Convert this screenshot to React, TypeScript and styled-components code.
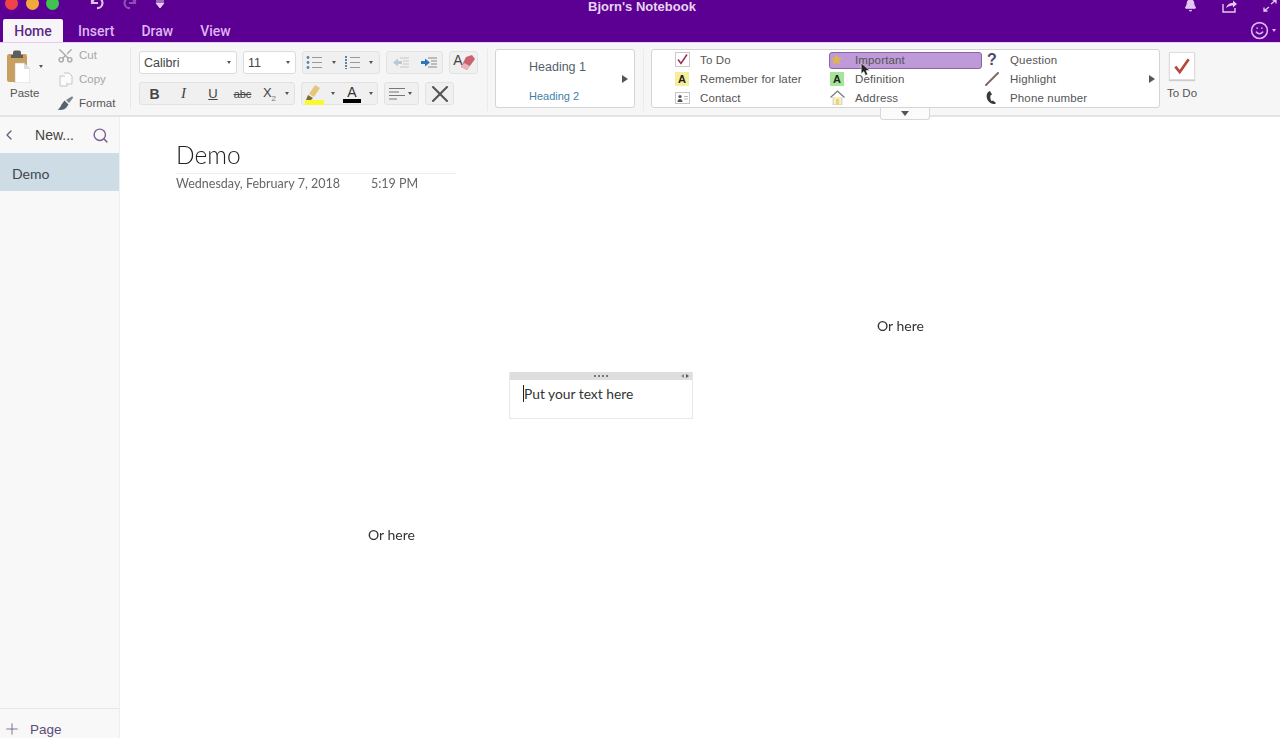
import React from 'react';
import styled, { createGlobalStyle } from 'styled-components';
import { Bell, ChevronLeft, Plus, Scissors, Search, Smile, X } from 'lucide-react';

const GlobalStyle = createGlobalStyle`
  html, body, #root { margin: 0; height: 100%; }
  body {
    background: #fff;
    color: #333;
    font-family: "Liberation Sans", Arial, sans-serif;
    overflow: hidden;
  }
`;

const Window = styled.div`
  display: flex;
  flex-direction: column;
  height: 738px;
  overflow: hidden;
  filter: blur(0.35px);
`;

const Header = styled.header`
  flex: none;
  height: 42px;
  background: #5b0092;
  display: flex;
  flex-direction: column;
`;

const TitleRow = styled.div`
  height: 19px;
  display: grid;
  grid-template-columns: 1fr auto 1fr;
  overflow: hidden;
`;

const TitleLeft = styled.div`
  display: flex;
  align-items: flex-start;
  padding-left: 5px;
`;

const Light = styled.span<{ $color: string }>`
  width: 13px;
  height: 13px;
  margin: -3px 7.5px 0 0;
  border-radius: 50%;
  background: ${(p) => p.$color};
  flex: none;
`;

const QuickIcon = styled.span<{ $dim?: boolean; $gap: number; $top?: number; $color?: string }>`
  display: flex;
  margin-left: ${(p) => p.$gap}px;
  margin-top: ${(p) => p.$top ?? -1}px;
  color: ${(p) => p.$color ?? 'inherit'};
  opacity: ${(p) => (p.$dim ? 0.4 : 1)};
`;

const NotebookTitle = styled.div`
  font-size: 13px;
  font-weight: 700;
  line-height: 14px;
  margin-left: 4px;
  color: #e6d5ee;
`;

const TitleRight = styled.div`
  display: flex;
  justify-content: flex-end;
  align-items: flex-start;
  gap: 25px;
  padding-right: 3px;
  color: #e3c9f0;
`;

const TabRow = styled.nav`
  flex: 1;
  display: flex;
  align-items: flex-end;
  padding-left: 3px;
`;

const Tab = styled.div<{ $active?: boolean }>`
  width: ${(p) => (p.$active ? '60px' : 'auto')};
  height: 23px;
  margin-right: ${(p) => (p.$active ? '15px' : '27px')};
  display: flex;
  align-items: center;
  justify-content: center;
  border-radius: 2px 2px 0 0;
  font: 500 14px "Roboto", sans-serif;
  background: ${(p) => (p.$active ? '#f8f5f9' : 'transparent')};
  color: ${(p) => (p.$active ? '#5b2a85' : '#dfb4f0')};
`;

const SmileButton = styled.div`
  margin-left: auto;
  align-self: center;
  display: flex;
  align-items: center;
  gap: 3px;
  margin-right: 4px;
  color: #dfb4f0;
`;

const Caret = styled.span<{ $size?: number; $color?: string }>`
  width: 0;
  height: 0;
  flex: none;
  border-left: ${(p) => p.$size ?? 3}px solid transparent;
  border-right: ${(p) => p.$size ?? 3}px solid transparent;
  border-top: ${(p) => (p.$size ?? 3) + 1}px solid ${(p) => p.$color ?? '#555'};
`;

const Ribbon = styled.section`
  flex: none;
  height: 75px;
  box-sizing: border-box;
  display: flex;
  background: #f6f6f6;
  border-top: 1px solid #ecc9f7;
  border-bottom: 2px solid #e4e4e4;
  position: relative;
  font-size: 11.5px;
  letter-spacing: 0.15px;
`;

const PasteGroup = styled.div`
  width: 130px;
  height: 62px;
  margin-top: 4px;
  flex: none;
  display: flex;
  border-right: 1px solid #e8e8e8;
  letter-spacing: 0;
`;

const PasteColumn = styled.div`
  width: 48px;
  display: flex;
  flex-direction: column;
  align-items: flex-start;
  padding-left: 6px;
  box-sizing: border-box;
`;

const PasteIconRow = styled.div`
  height: 38px;
  display: flex;
  align-items: center;
  gap: 9px;
`;

const PasteLabel = styled.div`
  margin-top: 2px;
  margin-left: 4px;
  color: #555;
`;

const ClipList = styled.div`
  display: flex;
  flex-direction: column;
  justify-content: space-between;
  margin-left: 9px;
  height: 64px;
`;

const ClipItem = styled.div<{ $dim?: boolean }>`
  display: flex;
  align-items: center;
  gap: 5px;
  height: 16px;
  color: ${(p) => (p.$dim ? '#a6a6a6' : '#555')};
`;

const ClipIcon = styled.span`
  width: 17px;
  display: flex;
  justify-content: center;
`;

const ScissorsIcon = styled(Scissors)`
  transform: rotate(-90deg);
`;

const FontArea = styled.div`
  margin: 8px 0 0 8px;
  width: 340px;
  flex: none;
  display: flex;
  flex-direction: column;
  gap: 8px;
  letter-spacing: 0;
`;

const ToolRow = styled.div`
  display: flex;
  gap: 6px;
  height: 23px;
`;

const Select = styled.div<{ $width: number }>`
  width: ${(p) => p.$width}px;
  box-sizing: border-box;
  display: flex;
  align-items: center;
  justify-content: space-between;
  padding: 0 5px 0 4px;
  background: #fff;
  border: 1px solid #dcdcdc;
  border-radius: 3px;
  font-size: 12.5px;
  color: #444;
`;

const ToolGroup = styled.div<{ $width: number }>`
  width: ${(p) => p.$width}px;
  box-sizing: border-box;
  display: flex;
  align-items: center;
  background: #f0f0f0;
  border: 1px solid #e2e2e2;
  border-radius: 3px;
`;

const Tool = styled.div<{ $width: number }>`
  width: ${(p) => p.$width}px;
  height: 100%;
  flex: none;
  display: flex;
  align-items: center;
  justify-content: center;
  color: #444;
`;

const Bold = styled.span`
  font-size: 14px;
  font-weight: 700;
`;
const Italic = styled.span`
  font: italic 400 15px "Liberation Serif", serif;
`;
const Under = styled.span`
  font-size: 13px;
  text-decoration: underline;
`;
const Strike = styled.span`
  font-size: 11px;
  text-decoration: line-through;
`;
const Sub = styled.span`
  font-size: 13px;
  sub { font-size: 8px; color: #777; }
`;

const FontColor = styled.span`
  display: flex;
  flex-direction: column;
  align-items: center;
  font-size: 14px;
  line-height: 14px;
  color: #333;
  &::after {
    content: '';
    width: 18px;
    height: 4px;
    background: #000;
  }
`;

const GroupDivider = styled.div`
  width: 1px;
  height: 62px;
  margin: 6px 7px 0 8px;
  flex: none;
  background: #ebebeb;
`;

const StylesBox = styled.div`
  width: 140px;
  height: 59px;
  margin-top: 6px;
  flex: none;
  box-sizing: border-box;
  background: #fff;
  border: 1px solid #d4d4d4;
  border-radius: 3px;
  display: flex;
  align-items: center;
  position: relative;
`;

const StyleNames = styled.div`
  margin-left: 33px;
  margin-top: 5px;
  flex: 1;
  display: flex;
  flex-direction: column;
  gap: 16px;
  letter-spacing: 0;
`;

const StyleName = styled.div<{ $second?: boolean }>`
  font-size: ${(p) => (p.$second ? '11px' : '12.5px')};
  color: ${(p) => (p.$second ? '#3f7fa8' : '#555f6b')};
`;

const MoreArrow = styled.span`
  width: 0;
  height: 0;
  margin-right: 6px;
  border-top: 4px solid transparent;
  border-bottom: 4px solid transparent;
  border-left: 6px solid #555;
`;

const TagsWrap = styled.div`
  position: relative;
`;

const TagsBox = styled(StylesBox)`
  width: 509px;
  padding-left: 22px;
  display: grid;
  grid-template-columns: 155px 155px 1fr;
  grid-template-rows: repeat(3, 19px);
  align-items: stretch;
  align-content: center;
`;

const TagRow = styled.div`
  display: flex;
  align-items: center;
  color: #555;
  position: relative;
`;

const TagIcon = styled.span`
  width: 26px;
  flex: none;
  display: flex;
  padding-left: 1px;
  box-sizing: border-box;
`;

const QuestionMark = styled.span`
  margin-left: 2px;
  font-size: 16px;
  line-height: 16px;
  font-weight: 700;
  color: #4a4a6a;
`;

const HotPill = styled.span`
  position: absolute;
  left: 0;
  right: 2px;
  top: 2px;
  height: 17px;
  box-sizing: border-box;
  background: #bf9ad8;
  border: 1px solid #8d62ab;
  border-radius: 3px;
`;

const HotLabel = styled.span`
  position: relative;
  display: flex;
  align-items: center;
`;

const Pointer = styled.svg`
  position: absolute;
  left: 31px;
  top: 12px;
`;

const GalleryArrow = styled(MoreArrow)`
  position: absolute;
  right: 4px;
  top: 25px;
  margin: 0;
`;

const LetterTag = styled.span<{ $bg: string }>`
  width: 14px;
  height: 14px;
  display: flex;
  align-items: center;
  justify-content: center;
  background: ${(p) => p.$bg};
  color: #222;
  font-size: 11px;
  font-weight: 700;
`;

const ExpandTab = styled.div`
  position: absolute;
  left: 229px;
  top: 65px;
  width: 50px;
  height: 12px;
  box-sizing: border-box;
  display: flex;
  justify-content: center;
  padding-top: 3px;
  background: #fbfbfb;
  border: 1px solid #d8d8d8;
  border-top: none;
  border-radius: 0 0 3px 3px;
  z-index: 2;
`;

const ToDoColumn = styled.div`
  margin: 9px 0 0 8px;
  width: 28px;
  display: flex;
  flex-direction: column;
  align-items: center;
  gap: 7px;
`;

const ToDoBox = styled.div`
  width: 24px;
  height: 26px;
  background: #fff;
  border: 1px solid #ddd;
  box-shadow: 0 1px 1px #ccc;
  display: flex;
  align-items: center;
  justify-content: center;
`;

const ToDoLabel = styled.div`
  white-space: nowrap;
  letter-spacing: 0;
  color: #555;
`;

const Body = styled.main`
  flex: 1;
  min-height: 0;
  display: flex;
`;

const Sidebar = styled.aside`
  width: 120px;
  flex: none;
  box-sizing: border-box;
  display: flex;
  flex-direction: column;
  background: #f8f8f8;
  border-right: 1px solid #eee;
`;

const SideHead = styled.div`
  height: 36px;
  display: flex;
  align-items: center;
  justify-content: space-between;
  padding: 0 10px 0 1px;
  font-size: 14px;
  color: #444;
`;

const PageRow = styled.div`
  height: 38px;
  display: flex;
  align-items: center;
  padding: 2px 0 0 12px;
  box-sizing: border-box;
  background: #cddce5;
  font: 14px "Lato", sans-serif;
  color: #3d4650;
`;

const SideFoot = styled.div`
  margin-top: auto;
  height: 30px;
  padding: 11px 0 0 3px;
  box-sizing: border-box;
  display: flex;
  align-items: center;
  gap: 9px;
  border-top: 1px solid #e6e6e6;
  font-size: 13.5px;
  color: #5d4a78;
`;

const Canvas = styled.div`
  flex: 1;
  position: relative;
  font-family: "Lato", sans-serif;
`;

const PageHead = styled.div`
  width: 291px;
  margin: 21px 0 0 45px;
  padding-left: 11px;
  box-sizing: border-box;
`;

const PageTitle = styled.div`
  height: 35px;
  line-height: 33px;
  border-bottom: 1px solid #ececec;
  font-size: 24.5px;
  font-weight: 300;
  color: #222;
`;

const PageDate = styled.div`
  display: flex;
  gap: 31px;
  margin-top: 2px;
  font-size: 12.5px;
  line-height: 15px;
  color: #666;
`;

const Outline = styled.div`
  position: absolute;
  left: 389px;
  top: 255px;
  width: 184px;
  height: 47px;
  box-sizing: border-box;
  background: #fff;
  border: 1px solid #e8e8e8;
  border-top: none;
`;

const OutlineBar = styled.div`
  height: 8px;
  background: #dedede;
  display: flex;
  align-items: center;
  justify-content: center;
  position: relative;
  &::before {
    content: '';
    width: 14px;
    border-top: 2px dotted #777;
  }
`;

const ResizeHandle = styled.span`
  position: absolute;
  right: 3px;
  top: 2px;
  display: flex;
  gap: 2px;
`;

const Triangle = styled.span<{ $right?: boolean }>`
  width: 0;
  height: 0;
  border-top: 2.5px solid transparent;
  border-bottom: 2.5px solid transparent;
  ${(p) => (p.$right ? 'border-left: 3px solid #555;' : 'border-right: 3px solid #888;')}
`;

const OutlineText = styled.div`
  margin: 5px 0 0 13px;
  border-left: 1px solid #222;
  width: 140px;
  height: 17px;
  font-size: 13.8px;
  line-height: 17px;
  color: #333;
  white-space: nowrap;
`;

const FreeText = styled.div<{ $x: number; $y: number }>`
  position: absolute;
  left: ${(p) => p.$x}px;
  top: ${(p) => p.$y}px;
  font-size: 14px;
  line-height: 16px;
  color: #333;
`;

const ClipboardIcon = () => (
  <svg width="24" height="33" viewBox="0 0 24 33">
    <rect x="1" y="4" width="20" height="28" rx="2" fill="#c99f5f" />
    <path d="M7 5V2.5a2 2 0 0 1 2-2h4a2 2 0 0 1 2 2V5h2v3H5V5z" fill="#5d5d5d" />
    <path d="M9 13h9l6 6v14H9z" fill="#fff" stroke="#bbb" strokeWidth=".6" />
    <path d="M18 13v6h6z" fill="#ddd" />
  </svg>
);

const CopyIcon = () => (
  <svg width="14" height="15" viewBox="0 0 14 15" fill="#fbfbfb" stroke="#c4c4c4">
    <path d="M1 4h5l2 2v8H1z" />
    <path d="M5 1h5l3 3v8H8" />
  </svg>
);

const BrushIcon = () => (
  <svg width="17" height="15" viewBox="0 0 17 15">
    <path d="M9 4l3 3 4-5c.6-.9-.5-2-1.400-1.400z" fill="#7a8794" />
    <path d="M7.500 4.500l4 4-2.500 3.500c-2 2-5.500 2.500-8.500 1.500 2-1 3-2.500 4-5z" fill="#55626f" />
  </svg>
);

const ListIcon = ({ numbered }: { numbered?: boolean }) => (
  <svg width="17" height="15" viewBox="0 0 17 15" stroke="#999" strokeWidth="1.200">
    <path d="M6 2.500h10M6 7.500h10M6 12.500h10" />
    {numbered ? (
      <path d="M2 1v13" stroke="#5e83a8" strokeWidth="2" strokeDasharray="2 1" />
    ) : (
      <g fill="#5e83a8" stroke="none">
        <circle cx="2" cy="2.500" r="1.400" />
        <circle cx="2" cy="7.500" r="1.400" />
        <circle cx="2" cy="12.500" r="1.400" />
      </g>
    )}
  </svg>
);

const IndentIcon = ({ more }: { more?: boolean }) => (
  <svg width="18" height="13" viewBox="0 0 18 13">
    <path d="M8 2h9M11 5h6M11 8h6M8 11h9" stroke={more ? '#888' : '#c8c8c8'} strokeWidth="1.200" />
    {more ? (
      <path d="M1 5h4V2.500l5 4-5 4V8H1z" fill="#2f74b5" />
    ) : (
      <path d="M10 5H6V2.500l-5 4 5 4V8h4z" fill="#b6c8da" />
    )}
  </svg>
);

const EraserLetter = styled.span`
  font-size: 14px;
  line-height: 14px;
  margin: -6px -4px 0 0;
  color: #444;
`;

const EraserIcon = () => (
  <svg width="16" height="17" viewBox="0 0 16 17">
    <path d="M7 3l6-2 3 4-8 11-6-3z" fill="#c8636f" />
    <path d="M2 13l3-4 6 3-3 4z" fill="#e7b7bb" />
  </svg>
);

const HighlighterIcon = () => (
  <svg width="20" height="22" viewBox="0 0 20 22">
    <path d="M5 11l6-9 5 3-6 9z" fill="#e6c67c" />
    <path d="M4 12l5 3-2 2H2z" fill="#7b6a3b" />
    <rect x="1" y="17" width="19" height="5" fill="#f6fa2e" />
  </svg>
);

const AlignIcon = () => (
  <svg width="16" height="13" viewBox="0 0 16 13" stroke="#777" strokeWidth="1.200">
    <path d="M0 1.500h16M0 5h10M0 8.500h16M0 12h8" />
  </svg>
);

const CheckBox = () => (
  <svg width="15" height="15" viewBox="0 0 15 15">
    <rect x=".5" y=".5" width="14" height="14" fill="#fff" stroke="#c9c9c9" />
    <path d="M3 7.500l3 4 6-9" fill="none" stroke="#9b2f4d" strokeWidth="1.500" />
  </svg>
);

const StarIcon = () => (
  <svg width="13" height="13" viewBox="0 0 13 13">
    <path d="M6.500 1l1.700 3.600 3.800.5-2.800 2.700.7 3.900-3.400-1.900-3.400 1.900.7-3.900L1 5.100l3.800-.5z" fill="#dfb64e" />
  </svg>
);

const ContactIcon = () => (
  <svg width="15" height="12" viewBox="0 0 15 12">
    <rect x=".5" y=".5" width="14" height="11" fill="#fff" stroke="#c4c4c4" />
    <circle cx="5" cy="4.500" r="1.600" fill="#555" />
    <path d="M2.500 10c0-2 1-3 2.500-3s2.500 1 2.500 3z" fill="#555" />
    <path d="M9 4.500h4M9 7h4" stroke="#bbb" />
  </svg>
);

const HouseIcon = () => (
  <svg width="15" height="15" viewBox="0 0 15 15">
    <path d="M3 7v8h9V7" fill="#f7edbe" stroke="#bbb" strokeWidth=".6" />
    <path d="M.5 7.500L7.500 1l7 6.500" fill="none" stroke="#777" strokeWidth="1.200" />
    <rect x="6" y="9" width="3" height="6" fill="#e8d47a" />
  </svg>
);

const PencilIcon = () => (
  <svg width="15" height="15" viewBox="0 0 15 15">
    <path d="M1 14L13 2" stroke="#7c6a68" strokeWidth="2" strokeLinecap="round" />
  </svg>
);

const PhoneIcon = () => (
  <svg width="12" height="15" viewBox="0 0 12 15">
    <path d="M5 1C2 2 1 5 2 8.500 3 12 6 14 10 14l1-1-3-2.500-1.300.8C5.500 10 5 7 5.500 5.500L7 4.500 5 1z" fill="#3a3a3a" />
  </svg>
);

const ShareIcon = () => (
  <svg width="16" height="14" viewBox="0 0 16 14" fill="none" stroke="currentColor" strokeWidth="1.400">
    <path d="M1 5v8h12V9" />
    <path d="M4 9c1-3 3-5 7-5V1.500L15 5l-4 3.500V6.500C8 6.500 6 7.500 4 9z" fill="currentColor" stroke="none" />
  </svg>
);

const FullIcon = () => (
  <svg width="14" height="13" viewBox="0 0 14 13" fill="none" stroke="currentColor" strokeWidth="1.300">
    <path d="M8 5l5-4M9.500 1H13v3.500M6 8l-5 4M4.500 12H1V8.500" />
  </svg>
);

const UndoIcon = () => (
  <svg width="16" height="14" viewBox="0 0 16 14" fill="none" stroke="currentColor" strokeWidth="2.200">
    <path d="M3 1v6h6" />
    <path d="M3.500 6.500A5 5 0 1 1 8 12" />
  </svg>
);

const RedoIcon = () => (
  <svg width="16" height="14" viewBox="0 0 16 14" fill="none" stroke="currentColor" strokeWidth="2.200">
    <path d="M13 1v6H7" />
    <path d="M12.500 6.500A5 5 0 1 0 8 12" />
  </svg>
);

const tags = [
  { icon: <CheckBox />, label: 'To Do' },
  { icon: <StarIcon />, label: 'Important', hot: true },
  { icon: <QuestionMark>?</QuestionMark>, label: 'Question' },
  { icon: <LetterTag $bg="#f5ef9b">A</LetterTag>, label: 'Remember for later' },
  { icon: <LetterTag $bg="#a5e59a">A</LetterTag>, label: 'Definition' },
  { icon: <PencilIcon />, label: 'Highlight' },
  { icon: <ContactIcon />, label: 'Contact' },
  { icon: <HouseIcon />, label: 'Address' },
  { icon: <PhoneIcon />, label: 'Phone number' },
];

export default function App() {
  return (
    <>
      <GlobalStyle />
      <Window>
        <Header>
          <TitleRow>
            <TitleLeft>
              <Light $color="#f0424b" />
              <Light $color="#f2a93c" />
              <Light $color="#3fc24f" />
              <QuickIcon $gap={22} $top={-4} $color="#dcc4ea"><UndoIcon /></QuickIcon>
              <QuickIcon $gap={17} $top={-4} $dim $color="#dcc4ea"><RedoIcon /></QuickIcon>
              <QuickIcon $gap={17} $top={-1} $color="#e3d0ee">
                <svg width="10" height="10" viewBox="0 0 10 10"><path d="M1 2h8M1 4h8L5 9z" stroke="currentColor" fill="currentColor" /></svg>
              </QuickIcon>
            </TitleLeft>
            <NotebookTitle>Bjorn's Notebook</NotebookTitle>
            <TitleRight>
              <QuickIcon $gap={0}><Bell size={13} fill="currentColor" /></QuickIcon>
              <QuickIcon $gap={0}><ShareIcon /></QuickIcon>
              <QuickIcon $gap={0}><FullIcon /></QuickIcon>
            </TitleRight>
          </TitleRow>
          <TabRow>
            <Tab $active>Home</Tab>
            <Tab>Insert</Tab>
            <Tab>Draw</Tab>
            <Tab>View</Tab>
            <SmileButton>
              <Smile size={19} />
              <Caret $size={2.5} $color="#dfb4f0" />
            </SmileButton>
          </TabRow>
        </Header>

        <Ribbon>
          <PasteGroup>
            <PasteColumn>
              <PasteIconRow>
                <ClipboardIcon />
                <Caret $size={2.5} />
              </PasteIconRow>
              <PasteLabel>Paste</PasteLabel>
            </PasteColumn>
            <ClipList>
              <ClipItem $dim><ClipIcon><ScissorsIcon size={17} color="#aaa" /></ClipIcon>Cut</ClipItem>
              <ClipItem $dim><ClipIcon><CopyIcon /></ClipIcon>Copy</ClipItem>
              <ClipItem><ClipIcon><BrushIcon /></ClipIcon>Format</ClipItem>
            </ClipList>
          </PasteGroup>

          <FontArea>
            <ToolRow>
              <Select $width={98}>Calibri<Caret $size={2.5} /></Select>
              <Select $width={53}>11<Caret $size={2.5} /></Select>
              <ToolGroup $width={78}>
                <Tool $width={22}><ListIcon /></Tool>
                <Tool $width={17}><Caret $size={2.5} /></Tool>
                <Tool $width={20}><ListIcon numbered /></Tool>
                <Tool $width={17}><Caret $size={2.5} /></Tool>
              </ToolGroup>
              <ToolGroup $width={57}>
                <Tool $width={28}><IndentIcon /></Tool>
                <Tool $width={28}><IndentIcon more /></Tool>
              </ToolGroup>
              <ToolGroup $width={29}>
                <Tool $width={28}><EraserLetter>A</EraserLetter><EraserIcon /></Tool>
              </ToolGroup>
            </ToolRow>
            <ToolRow>
              <ToolGroup $width={156}>
                <Tool $width={29}><Bold>B</Bold></Tool>
                <Tool $width={29}><Italic>I</Italic></Tool>
                <Tool $width={30}><Under>U</Under></Tool>
                <Tool $width={29}><Strike>abc</Strike></Tool>
                <Tool $width={25}><Sub>X<sub>2</sub></Sub></Tool>
                <Tool $width={10}><Caret $size={2.5} /></Tool>
              </ToolGroup>
              <ToolGroup $width={77}>
                <Tool $width={24}><HighlighterIcon /></Tool>
                <Tool $width={14}><Caret $size={2.5} /></Tool>
                <Tool $width={24}><FontColor>A</FontColor></Tool>
                <Tool $width={14}><Caret $size={2.5} /></Tool>
              </ToolGroup>
              <ToolGroup $width={35}>
                <Tool $width={23}><AlignIcon /></Tool>
                <Caret $size={2.5} />
              </ToolGroup>
              <ToolGroup $width={29}>
                <Tool $width={28}><X size={30} color="#555" strokeWidth={1.8} /></Tool>
              </ToolGroup>
            </ToolRow>
          </FontArea>

          <GroupDivider />
          <StylesBox>
            <StyleNames>
              <StyleName>Heading 1</StyleName>
              <StyleName $second>Heading 2</StyleName>
            </StyleNames>
            <MoreArrow />
          </StylesBox>
          <GroupDivider />
          <TagsWrap>
            <TagsBox>
              {tags.map((tag) => (
                <TagRow key={tag.label}>
                  {tag.hot && <HotPill />}
                  <HotLabel>
                    <TagIcon>{tag.icon}</TagIcon>
                    {tag.label}
                  </HotLabel>
                  {tag.hot && (
                    <Pointer width="11" height="15" viewBox="0 0 10 14">
                      <path d="M1 1v10l2.500-2.200L5 12.500l2-1-1.500-3.500H9z" fill="#222" stroke="#fff" strokeWidth=".5" />
                    </Pointer>
                  )}
                </TagRow>
              ))}
              <GalleryArrow />
            </TagsBox>
            <ExpandTab><Caret $size={4} $color="#555" /></ExpandTab>
          </TagsWrap>
          <ToDoColumn>
            <ToDoBox>
              <svg width="20" height="20" viewBox="0 0 18 18">
                <path d="M3 9.500l4 5L15 3" fill="none" stroke="#b5483a" strokeWidth="2.400" />
              </svg>
            </ToDoBox>
            <ToDoLabel>To Do</ToDoLabel>
          </ToDoColumn>
        </Ribbon>

        <Body>
          <Sidebar>
            <SideHead>
              <ChevronLeft size={16} color="#6a5b80" />
              <span>New...</span>
              <Search size={17} color="#7a5f96" />
            </SideHead>
            <PageRow>Demo</PageRow>
            <SideFoot>
              <Plus size={18} strokeWidth={1} color="#5d4a78" />
              Page
            </SideFoot>
          </Sidebar>
          <Canvas>
            <PageHead>
              <PageTitle>Demo</PageTitle>
              <PageDate>
                <span>Wednesday, February 7, 2018</span>
                <span>5:19 PM</span>
              </PageDate>
            </PageHead>
            <FreeText $x={757} $y={201}>Or here</FreeText>
            <Outline>
              <OutlineBar>
                <ResizeHandle>
                  <Triangle />
                  <Triangle $right />
                </ResizeHandle>
              </OutlineBar>
              <OutlineText>Put your text here</OutlineText>
            </Outline>
            <FreeText $x={248} $y={410}>Or here</FreeText>
          </Canvas>
        </Body>
      </Window>
    </>
  );
}
